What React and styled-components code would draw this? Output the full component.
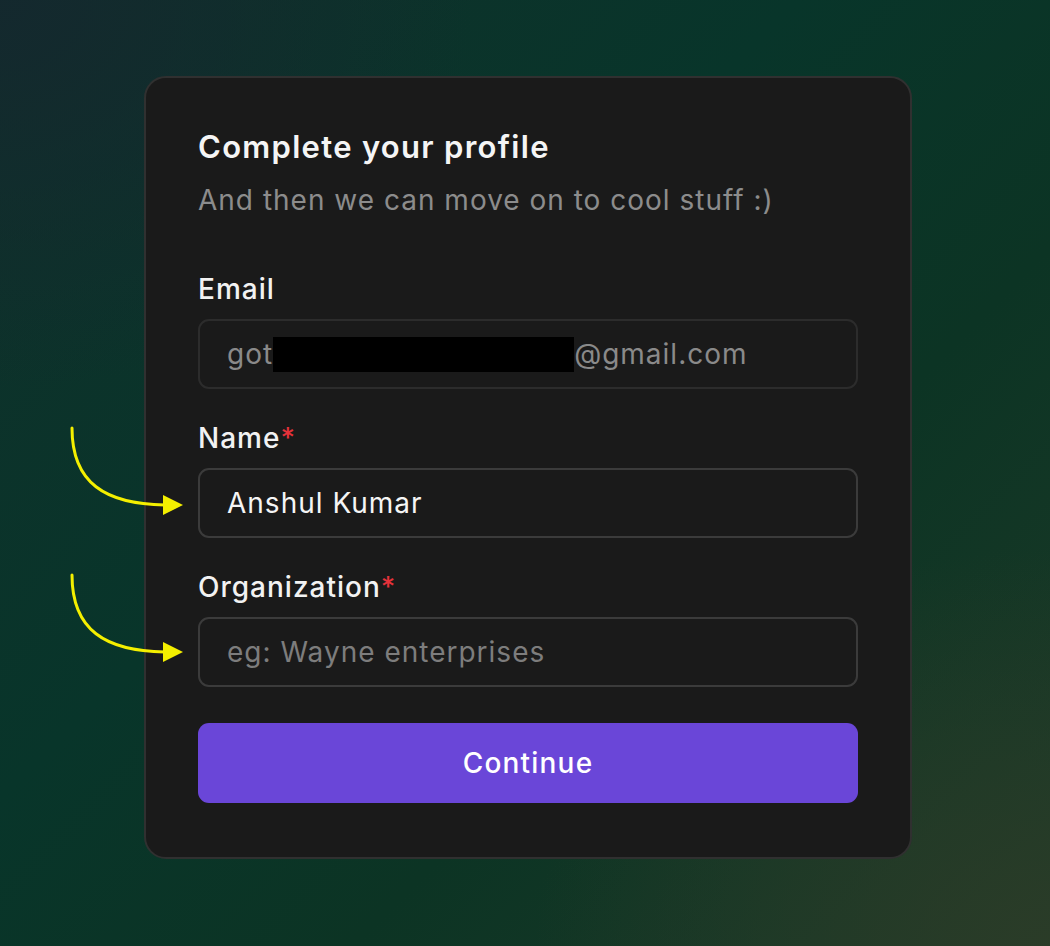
import React from "react";
import styled, { createGlobalStyle } from "styled-components";

const GlobalStyle = createGlobalStyle`
  html, body {
    margin: 0;
    padding: 0;
  }
  body {
    font-family: Inter, "Noto Sans", sans-serif;
    -webkit-font-smoothing: antialiased;
  }
`;

const Page = styled.div`
  position: relative;
  width: 1050px;
  min-height: 946px;
  box-sizing: border-box;
  padding: 76px 0 0 144px;
  background:
    radial-gradient(ellipse 70% 60% at 100% 100%, rgba(44, 60, 40, 0.9), rgba(44, 60, 40, 0) 70%),
    radial-gradient(ellipse 60% 55% at 0% 0%, rgba(20, 40, 46, 0.95), rgba(20, 40, 46, 0) 75%),
    linear-gradient(135deg, #10302b 0%, #08352a 40%, #0c3424 65%, #1d3a27 100%);
  overflow: hidden;
`;

const Card = styled.div`
  width: 768px;
  box-sizing: border-box;
  padding: 51px 52px 54px;
  background: #1a1a1a;
  border: 2px solid #303030;
  border-radius: 22px;
  display: flex;
  flex-direction: column;
`;

const Title = styled.h1`
  margin: 0;
  font-size: 31px;
  line-height: 36px;
  font-weight: 600;
  color: #f5f5f5;
  letter-spacing: 1.3px;
`;

const Subtitle = styled.p`
  margin: 18px 0 56px;
  font-size: 28px;
  line-height: 34px;
  color: #8c8c8c;
  letter-spacing: 1px;
`;

const Field = styled.div`
  display: flex;
  flex-direction: column;
  gap: 14px;
  margin-bottom: 33px;
`;

const Label = styled.label`
  font-size: 28px;
  line-height: 32px;
  font-weight: 500;
  color: #f2f2f2;
  letter-spacing: 1px;
`;

const Star = styled.span`
  color: #e5323a;
`;

const InputBox = styled.div`
  height: 70px;
  box-sizing: border-box;
  display: flex;
  align-items: center;
  padding: 0 27px;
  border: 2px solid ${(p) => (p.$disabled ? "#2c2c2c" : "#3b3b3b")};
  border-radius: 11px;
  background: #1a1a1a;
  font-size: 28px;
  letter-spacing: 1px;
  color: ${(p) => (p.$muted ? "#8a8a8a" : "#f5f5f5")};
`;

const Input = styled.input`
  width: 100%;
  border: none;
  outline: none;
  background: transparent;
  padding: 0;
  font-family: inherit;
  font-size: 28px;
  letter-spacing: 1px;
  color: #f5f5f5;

  &::placeholder {
    color: #7d7d7d;
  }
`;

const Redacted = styled.span`
  display: inline-block;
  width: 301px;
  height: 35px;
  background: #000;
`;

const Button = styled.button`
  margin-top: 3px;
  height: 80px;
  border: none;
  border-radius: 11px;
  background: #6a46d8;
  color: #fff;
  font-family: inherit;
  font-size: 28px;
  font-weight: 500;
  letter-spacing: 1.2px;
  cursor: pointer;
`;

const Arrow = styled.svg`
  position: absolute;
  left: 60px;
  top: ${(p) => p.$top}px;
  overflow: visible;
`;

const CurvedArrow = ({ top }) => (
  <Arrow $top={top} width="130" height="95" viewBox="0 0 130 95">
    <path
      d="M12 0 C 12 55, 45 76, 105 77"
      fill="none"
      stroke="#f4ef00"
      strokeWidth="3"
      strokeLinecap="round"
    />
    <polygon points="103,67 123,77 103,87" fill="#f4ef00" />
  </Arrow>
);

export default function App() {
  return (
    <>
      <GlobalStyle />
      <Page>
        <CurvedArrow top={428} />
        <CurvedArrow top={575} />
        <Card>
          <Title>Complete your profile</Title>
          <Subtitle>And then we can move on to cool stuff :)</Subtitle>

          <Field>
            <Label>Email</Label>
            <InputBox $disabled $muted>
              got
              <Redacted />
              @gmail.com
            </InputBox>
          </Field>

          <Field>
            <Label>
              Name<Star>*</Star>
            </Label>
            <InputBox>
              <Input defaultValue="Anshul Kumar" />
            </InputBox>
          </Field>

          <Field>
            <Label>
              Organization<Star>*</Star>
            </Label>
            <InputBox>
              <Input placeholder="eg: Wayne enterprises" />
            </InputBox>
          </Field>

          <Button>Continue</Button>
        </Card>
      </Page>
    </>
  );
}
